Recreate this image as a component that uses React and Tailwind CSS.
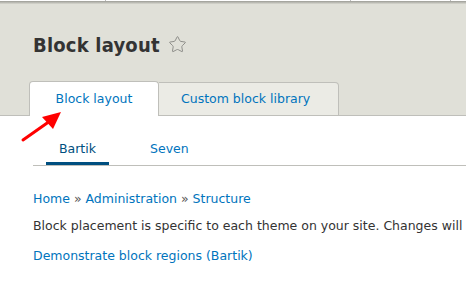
import { Star } from "lucide-react";

const font = { fontFamily: '"DejaVu Sans", Verdana, sans-serif' };

export default function App() {
  return (
    <div className="relative w-[466px] h-[295px] bg-white overflow-hidden" style={font}>
      {/* top strip */}
      <div className="relative h-[1px] bg-white">
        <span className="absolute left-[105px] top-0 h-[1px] w-[1px] bg-[#bbb]" />
        <span className="absolute left-[350px] top-0 h-[1px] w-[1px] bg-[#bbb]" />
        <span className="absolute left-[450px] top-0 h-[1px] w-[1px] bg-[#bbb]" />
      </div>
      <div className="h-[3px] bg-gradient-to-b from-[#9c9c96] to-[#d8d8d0]" />

      {/* header */}
      <div className="bg-[#e0e0d8] border-b border-[#bfbfba] h-[112px] flex flex-col">
        <div className="flex gap-[8px] pl-[33px] pt-[25px] h-[77px] items-start">
          <h1 className="text-[20px] font-bold text-[#333] leading-[32px] tracking-[0.2px]" style={{ fontFamily: '"DejaVu Sans Condensed", "DejaVu Sans", sans-serif' }}>
            Block layout
          </h1>
          <Star className="w-[19px] h-[19px] mt-[6px] text-[#8a8a86]" strokeWidth={1.2} />
        </div>
        <div className="flex pl-[29px] mt-auto -mb-[1px]">
          <div className="w-[130px] h-[35px] bg-white border border-b-0 border-[#bfbfba] rounded-t-[4px] flex items-center justify-center text-[12.5px] text-[#0074bd]">
            Block layout
          </div>
          <div className="w-[180px] h-[34px] mt-[1px] bg-[#ebebe5] border border-l-0 border-[#bfbfba] rounded-tr-[4px] flex items-center pl-[22px] text-[12.5px] text-[#0074bd]">
            Custom block library
          </div>
        </div>
      </div>

      {/* secondary tabs */}
      <div className="ml-[33px] mt-[18px] border-b border-[#bfbfba] flex">
        <div className="ml-[13px] w-[63px] h-[31px] flex items-start justify-center text-[12.5px] text-[#004f80] border-b-[3px] border-[#004f80] -mb-[2px] pt-[6px]">
          Bartik
        </div>
        <div className="ml-[28px] h-[31px] flex items-start pt-[6px] pl-[13px] text-[12.5px] text-[#0074bd]">
          Seven
        </div>
      </div>

      {/* content */}
      <div className="pl-[33px] pt-[24px] text-[12.5px] whitespace-nowrap">
        <div className="text-[#0074bd] leading-[18px]">
          Home <span className="text-[#555]">»</span> Administration <span className="text-[#555]">»</span> Structure
        </div>
        <p className="text-[#333] mt-[9px] leading-[18px]">
          Block placement is specific to each theme on your site. Changes will not be saved until you click Save blocks.
        </p>
        <div className="text-[#0074bd] mt-[12px] leading-[18px]">Demonstrate block regions (Bartik)</div>
      </div>

      {/* annotation arrow */}
      <svg className="absolute left-0 top-0 pointer-events-none" width="466" height="295">
        <line x1="23" y1="140" x2="50" y2="121" stroke="#f00" strokeWidth="3" strokeLinecap="round" />
        <polygon points="61,112 42,117 53,129" fill="#f00" />
      </svg>
    </div>
  );
}
